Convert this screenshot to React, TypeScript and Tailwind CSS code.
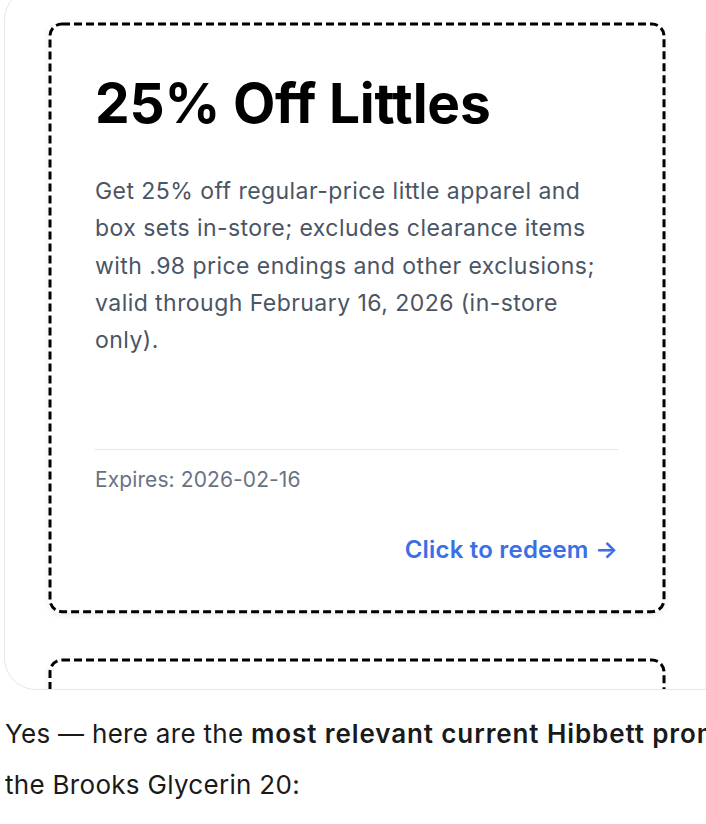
import React from "react";

type Coupon = {
	id: number;
	title: string;
	description: string;
	expires: string;
};

const coupons: Coupon[] = [
	{
		id: 1,
		title: "25% Off Littles",
		description:
			"Get 25% off regular-price little apparel and box sets in-store; excludes clearance items with .98 price endings and other exclusions; valid through February 16, 2026 (in-store only).",
		expires: "2026-02-16",
	},
	{
		id: 2,
		title: "$20 Off $100",
		description:
			"Save $20 when you spend $100 or more on regular-price footwear; cannot be combined with other offers.",
		expires: "2026-02-28",
	},
];

// dashed outline drawn as svg so the dash length matches (css dashes come out too short)
function DashedOutline() {
	return (
		<svg className="pointer-events-none absolute inset-[1.5px] h-[calc(100%-3px)] w-[calc(100%-3px)] overflow-visible">
			<rect
				x="0"
				y="0"
				width="100%"
				height="100%"
				rx="12"
				ry="12"
				fill="none"
				stroke="#000"
				strokeWidth="3"
				strokeDasharray="8 4"
			/>
		</svg>
	);
}

function CouponCard({ coupon }: { coupon: Coupon }) {
	return (
		<div className="relative w-[617px] shrink-0 rounded-[14px] bg-white p-[47px] shadow-[0_2px_6px_rgba(0,0,0,0.08)]">
			<DashedOutline />
			<h2 className="text-[55px] font-bold leading-tight tracking-[-0.2px] text-black">{coupon.title}</h2>
			<p className="mt-[35px] text-[23px] leading-[1.625] tracking-[0.45px] text-gray-600">{coupon.description}</p>
			<div className="mt-[89px] border-t border-gray-200 pt-4">
				<div className="text-[21px] leading-[28px] tracking-[0.1px] text-gray-500">Expires: {coupon.expires}</div>
			</div>
			<div className="mt-10 flex justify-end">
				<a href="#" className="text-[24px] font-semibold leading-[32px] tracking-[0.2px] text-[#3b6fe4]">
					Click to redeem →
				</a>
			</div>
		</div>
	);
}

export default function App() {
	return (
		<div className="h-[824px] w-[706px] overflow-hidden bg-white font-['Inter',sans-serif]">
			{/* COUPON LIST */}
			<div className="ml-[4px] mt-[-12px] flex h-[702px] w-[780px] overflow-hidden rounded-l-[32px] border border-gray-200 bg-white">
				<div className="flex w-[700px] shrink-0 flex-col gap-[46px] pl-[43px] pt-[33px]">
					{coupons.map((c) => (
						<CouponCard key={c.id} coupon={c} />
					))}
				</div>
				<div className="mt-[42px] flex-1 border-l border-gray-100 bg-[#fcfcfc]"></div>
			</div>

			{/* MESSAGE */}
			<p className="ml-[5px] mt-[18px] w-[1000px] text-[26px] leading-[51px] tracking-[0.3px] text-[#1a1a1a]">
				Yes — here are the{" "}
				<strong className="font-semibold tracking-[0.9px]">most relevant current Hibbett promotions</strong> for
				<br />
				the Brooks Glycerin 20:
			</p>
		</div>
	);
}
